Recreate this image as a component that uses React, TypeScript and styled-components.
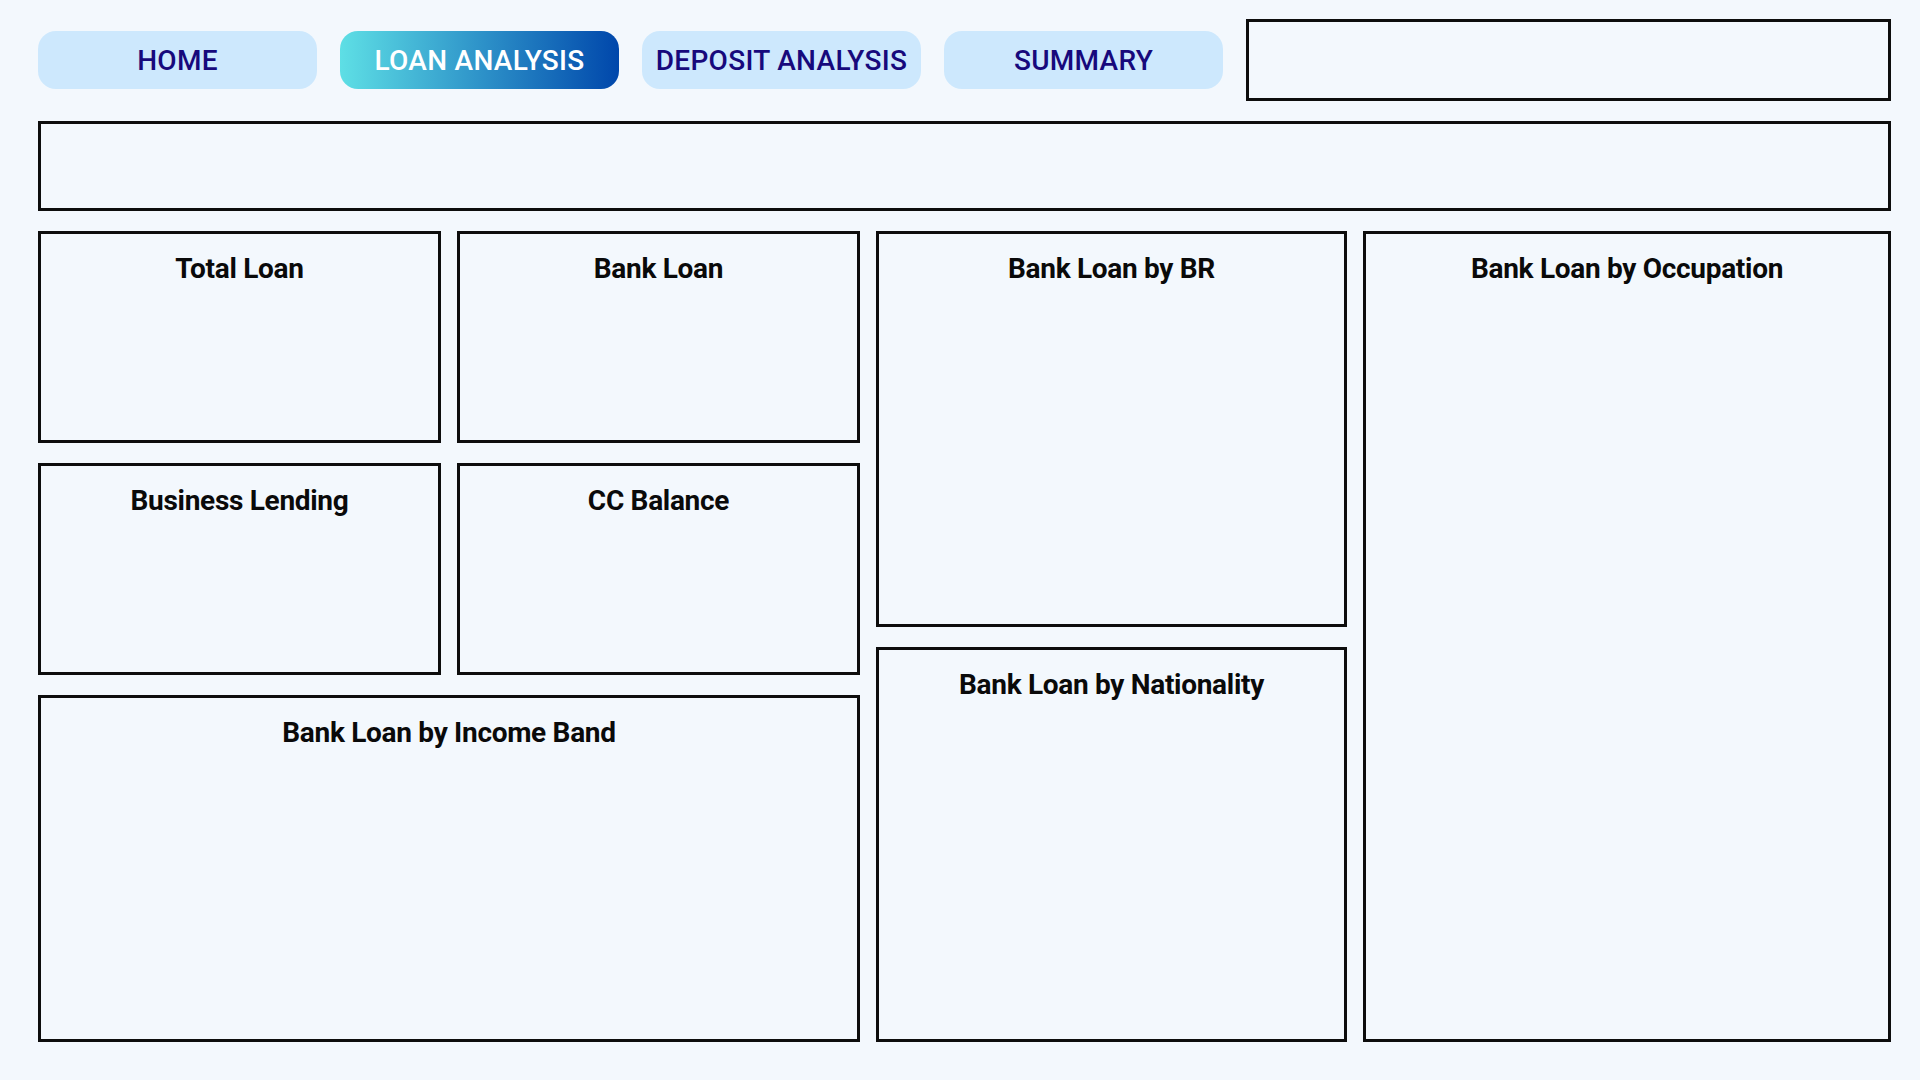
import React from "react";
import styled, { createGlobalStyle } from "styled-components";

const Global = createGlobalStyle`
  * { box-sizing: border-box; }
  html, body { margin: 0; padding: 0; background: #F3F8FD; }
  body { font-family: Roboto, "Noto Sans", sans-serif; }
`;

const Page = styled.div`
  width: 1920px;
  height: 1080px;
  padding: 19px 29px 0 38px;
  display: flex;
  flex-direction: column;
  gap: 20px;
  background: #F3F8FD;
`;

const Header = styled.header`
  display: flex;
  align-items: center;
  gap: 23px;
  height: 82px;
`;

const NavButton = styled.button<{ $active?: boolean }>`
  width: 279px;
  height: 58px;
  flex: none;
  border: none;
  border-radius: 18px;
  padding: 0;
  font-family: Roboto, "Noto Sans", sans-serif;
  font-size: 28px;
  font-weight: 500;
  letter-spacing: 0.3px;
  color: ${(p) => (p.$active ? "#ffffff" : "#17097C")};
  background: ${(p) =>
    p.$active ? "linear-gradient(90deg, #5EDFE5 0%, #2E93C9 50%, #0047AB 100%)" : "#CDE8FD"};
  cursor: pointer;
`;

const SlicerBox = styled.div`
  flex: 1;
  height: 82px;
  border: 3px solid #0d0d0d;
`;

const Banner = styled.div`
  height: 90px;
  border: 3px solid #0d0d0d;
`;

const Dashboard = styled.main`
  display: grid;
  grid-template-columns: 822px 471px 1fr;
  gap: 16px;
  height: 811px;
`;

const LeftGrid = styled.div`
  display: grid;
  grid-template-columns: 1fr 1fr;
  grid-template-rows: 212px 212px 1fr;
  gap: 20px 16px;
`;

const MiddleCol = styled.div`
  display: flex;
  flex-direction: column;
  gap: 20px;
`;

const Card = styled.section<{ $span?: number }>`
  border: 3px solid #0d0d0d;
  padding-top: 18px;
  display: flex;
  flex-direction: column;
  align-items: center;
  min-height: 0;
  ${(p) => (p.$span ? `grid-column: span ${p.$span};` : "")}
`;

const StackCard = styled(Card)`
  flex: 1;
`;

const Title = styled.h2`
  margin: 0;
  font-family: Roboto, "Noto Sans", sans-serif;
  font-size: 28px;
  line-height: 34px;
  font-weight: 700;
  letter-spacing: -0.3px;
  color: #0a0a0a;
  text-align: center;
`;

export default function App() {
  return (
    <>
      <Global />
      <Page>
        <Header>
          <NavButton>HOME</NavButton>
          <NavButton $active>LOAN ANALYSIS</NavButton>
          <NavButton>DEPOSIT ANALYSIS</NavButton>
          <NavButton>SUMMARY</NavButton>
          <SlicerBox />
        </Header>
        <Banner />
        <Dashboard>
          <LeftGrid>
            <Card><Title>Total Loan</Title></Card>
            <Card><Title>Bank Loan</Title></Card>
            <Card><Title>Business Lending</Title></Card>
            <Card><Title>CC Balance</Title></Card>
            <Card $span={2}><Title>Bank Loan by Income Band</Title></Card>
          </LeftGrid>
          <MiddleCol>
            <StackCard><Title>Bank Loan by BR</Title></StackCard>
            <StackCard><Title>Bank Loan by Nationality</Title></StackCard>
          </MiddleCol>
          <Card><Title>Bank Loan by Occupation</Title></Card>
        </Dashboard>
      </Page>
    </>
  );
}
